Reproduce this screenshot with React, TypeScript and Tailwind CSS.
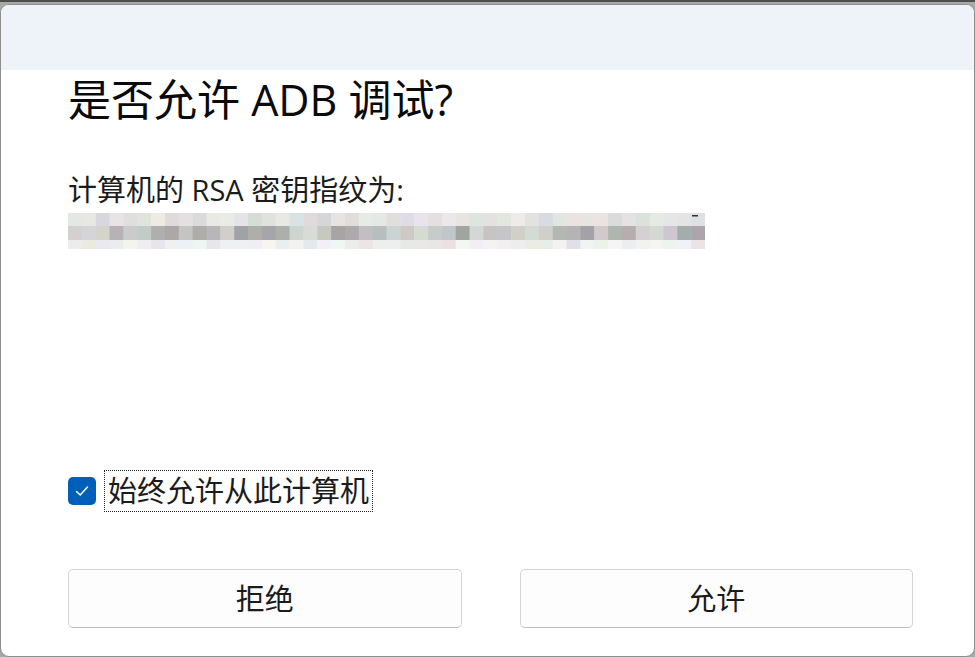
import React from 'react';

const FONT = '"Segoe UI", "Open Sans", "Noto Sans CJK SC", sans-serif';

// deterministic pseudo-random shades for the blurred fingerprint
function makeRand(seed: number) {
  let s = seed;
  return () => {
    s = (s * 1103515245 + 12345) % 2147483648;
    return s / 2147483648;
  };
}

function shade(rand: () => number, base: number, spread: number): string {
  const v = Math.round(base + (rand() - 0.5) * spread);
  const tint = () => Math.max(0, Math.min(255, v + Math.round((rand() - 0.5) * 12)));
  return `rgb(${tint()},${tint()},${tint()})`;
}

function BlurredKey() {
  const rand = makeRand(42);
  const cols = 46;
  const w = 637 / cols;
  const rows = [
    { y: 0, h: 13, base: 226, spread: 18 },
    { y: 13, h: 14, base: 190, spread: 56 },
    { y: 27, h: 9, base: 236, spread: 16 },
  ];
  return (
    <svg width="637" height="36" viewBox="0 0 637 36" className="block">
      {rows.map((r, ri) =>
        Array.from({ length: cols }).map((_, ci) => (
          <rect
            key={`${ri}-${ci}`}
            x={ci * w}
            y={r.y}
            width={w + 0.5}
            height={r.h}
            fill={shade(rand, r.base, r.spread)}
          />
        ))
      )}
      <rect x="624" y="2" width="6" height="1.5" fill="#333" />
    </svg>
  );
}

export default function App() {
  return (
    <div
      className="w-[975px] h-[657px] overflow-hidden bg-[#a8a8a8] border-t-2 border-[#4d4d4d] pt-[2px]"
      style={{ fontFamily: FONT }}
    >
      <div className="h-[653px] rounded-[9px] border border-[#8e8e8e] bg-white overflow-hidden">
        <div className="h-[65px] bg-[#eef2f9]" />

        <div className="pl-[67px] pr-[61px] flex flex-col">
          <h1 className="mt-[4px] text-[43px] leading-[52px] text-[#0a0a0a] font-normal">
            是否允许 ADB 调试?
          </h1>

          <p className="mt-[44px] text-[29px] leading-[40px] text-[#1b1b1b]">
            计算机的 RSA 密钥指纹为:
          </p>

          <div className="mt-[3px]">
            <BlurredKey />
          </div>

          <div className="mt-[221px] flex items-center h-[42px]">
            <div className="w-[28px] h-[28px] rounded-[5px] bg-[#005fb8] flex items-center justify-center">
              <svg width="18" height="18" viewBox="0 0 18 18" fill="none">
                <path d="M3.5 9.5 L7.2 13 L14.5 5" stroke="white" strokeWidth="1.5" strokeLinecap="round" strokeLinejoin="round" />
              </svg>
            </div>
            <span className="ml-[8px] h-[42px] px-[3px] flex items-center border border-dotted border-[#222] text-[29px] text-[#1b1b1b]">
              始终允许从此计算机
            </span>
          </div>

          <div className="mt-[57px] grid grid-cols-2 gap-[58px]">
            <button className="h-[59px] rounded-[5px] border border-[#d4d4d4] border-b-[#bdbdbd] bg-[#fdfdfd] text-[29px] text-[#1b1b1b]">
              拒绝
            </button>
            <button className="h-[59px] rounded-[5px] border border-[#d4d4d4] border-b-[#bdbdbd] bg-[#fdfdfd] text-[29px] text-[#1b1b1b]">
              允许
            </button>
          </div>
        </div>
      </div>
    </div>
  );
}
